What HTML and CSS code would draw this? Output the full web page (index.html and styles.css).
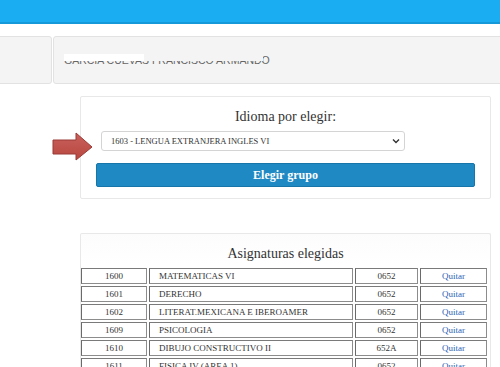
FILE: index.html
```html
<!DOCTYPE html>
<html lang="es">
<head>
<meta charset="utf-8">
<title>Elegir idioma</title>
<link rel="stylesheet" href="styles.css">
</head>
<body>
<div class="topbar"></div>
<div class="userbar">
  <div class="userbar-left"></div>
  <div class="userbar-right"><span class="username">GARCIA CUEVAS FRANCISCO ARMANDO</span></div>
</div>

<div class="card card-idioma">
  <svg class="arrow" width="41" height="29" viewBox="0 0 41 29">
    <defs>
      <linearGradient id="ag" x1="0" y1="0" x2="0" y2="1">
        <stop offset="0" stop-color="#c9605c"/>
        <stop offset="1" stop-color="#b8473f"/>
      </linearGradient>
    </defs>
    <polygon points="1,8 24,8 24,1 40,15 24,28 24,22 1,22" fill="url(#ag)" stroke="#9a3a36" stroke-width="1"/>
  </svg>
  <h2 class="card-title">Idioma por elegir:</h2>
  <div class="select-wrap">
    <select class="select">
      <option>1603 - LENGUA EXTRANJERA INGLES VI</option>
    </select>
    <svg class="chevron" width="8" height="6" viewBox="0 0 8 6"><path d="M1 1.5 L4 4.5 L7 1.5" fill="none" stroke="#333" stroke-width="1.4"/></svg>
  </div>
  <button class="btn">Elegir grupo</button>
</div>

<div class="card card-asig">
  <h2 class="card-title">Asignaturas elegidas</h2>
  <table class="asig">
    <tr><td class="c1">1600</td><td class="c2">MATEMATICAS VI</td><td class="c3">0652</td><td class="c4"><a href="#">Quitar</a></td></tr>
    <tr><td class="c1">1601</td><td class="c2">DERECHO</td><td class="c3">0652</td><td class="c4"><a href="#">Quitar</a></td></tr>
    <tr><td class="c1">1602</td><td class="c2">LITERAT.MEXICANA E IBEROAMER</td><td class="c3">0652</td><td class="c4"><a href="#">Quitar</a></td></tr>
    <tr><td class="c1">1609</td><td class="c2">PSICOLOGIA</td><td class="c3">0652</td><td class="c4"><a href="#">Quitar</a></td></tr>
    <tr><td class="c1">1610</td><td class="c2">DIBUJO CONSTRUCTIVO II</td><td class="c3">652A</td><td class="c4"><a href="#">Quitar</a></td></tr>
    <tr><td class="c1">1611</td><td class="c2">FISICA IV (AREA 1)</td><td class="c3">0652</td><td class="c4"><a href="#">Quitar</a></td></tr>
  </table>
</div>
</body>
</html>
```

FILE: styles.css
```css
html, body {
  margin: 0;
  padding: 0;
  background: #ffffff;
  font-family: "Liberation Serif", "Times New Roman", serif;
  color: #333;
}

.topbar {
  height: 22px;
  background: #1aadf2;
  border-bottom: 2px solid #1699d8;
}

.userbar {
  display: flex;
  margin-top: 12px;
  height: 48px;
  gap: 1px;
}

.userbar-left,
.userbar-right {
  background: #f4f4f4;
  border: 1px solid #e2e2e2;
  border-radius: 3px;
  box-sizing: border-box;
}

.userbar-left {
  width: 56px;
  margin-left: -4px;
}

.userbar-right {
  flex: 1;
  display: flex;
  align-items: center;
  padding-left: 10px;
  margin-right: -4px;
}

.username {
  position: relative;
  font-family: "Liberation Sans", Arial, sans-serif;
  font-size: 10.5px;
  color: #666;
  line-height: 12px;
  margin-top: 0;
}

.username::before {
  content: "";
  position: absolute;
  left: 0;
  top: 0;
  width: 80px;
  height: 7px;
  background: #ffffff;
}

.username::after {
  content: "";
  position: absolute;
  left: 80px;
  top: 0;
  width: 119px;
  height: 7px;
  background: #f4f4f4;
}

.card {
  position: relative;
  margin-left: 80px;
  width: 411px;
  box-sizing: border-box;
  border: 1px solid #e8e8e8;
  border-radius: 2px;
}

.card-idioma {
  margin-top: 12px;
  padding: 12px 15px 11px 15px;
  display: flex;
  flex-direction: column;
}

.arrow {
  position: absolute;
  left: -29px;
  top: 35px;
}

.card-title {
  margin: 0;
  font-size: 14px;
  font-weight: normal;
  line-height: 16px;
  text-align: center;
  color: #333;
}

.select-wrap {
  position: relative;
  margin: 6px 0 0 5px;
  width: 304px;
}

.select {
  -webkit-appearance: none;
  appearance: none;
  display: block;
  width: 100%;
  height: 20px;
  box-sizing: border-box;
  border: 1px solid #d4d4d4;
  border-radius: 3px;
  background: #fff;
  font-family: "Liberation Serif", "Times New Roman", serif;
  font-size: 8.5px;
  color: #333;
  padding: 0 0 0 9px;
  line-height: 18px;
}

.chevron {
  position: absolute;
  right: 5px;
  top: 7px;
}

.btn {
  margin: 12px 0 0 0;
  width: 379px;
  height: 24px;
  box-sizing: border-box;
  background: #1f89c4;
  border: 1px solid #1875aa;
  border-radius: 2px;
  color: #fff;
  font-family: "Liberation Serif", "Times New Roman", serif;
  font-size: 12px;
  font-weight: bold;
  padding: 0;
}

.card-asig {
  margin-top: 34px;
  padding: 12px 0 0 0;
  border-bottom: none;
  background: linear-gradient(#fcfcfc, #ffffff 30px);
}

.asig {
  margin: 4px -2px 0 -2px;
  width: 410px;
  table-layout: fixed;
  border-collapse: separate;
  border-spacing: 2px;
  font-size: 9px;
  color: #333;
}

.asig td {
  box-sizing: border-box;
  height: 16px;
  padding: 0;
  border: 1px solid #8c8c8c;
  border-left-color: #6a6a6a;
  border-top-color: #7a7a7a;
  background: #fff;
  line-height: 13px;
}

.c1 { width: 66px; text-align: center; }
.c2 { width: 204px; text-align: left; padding-left: 9px !important; }
.c3 { width: 63px; text-align: center; }
.c4 { width: 67px; text-align: center; }

.c4 a {
  color: #2b5fb4;
  text-decoration: none;
}
```
